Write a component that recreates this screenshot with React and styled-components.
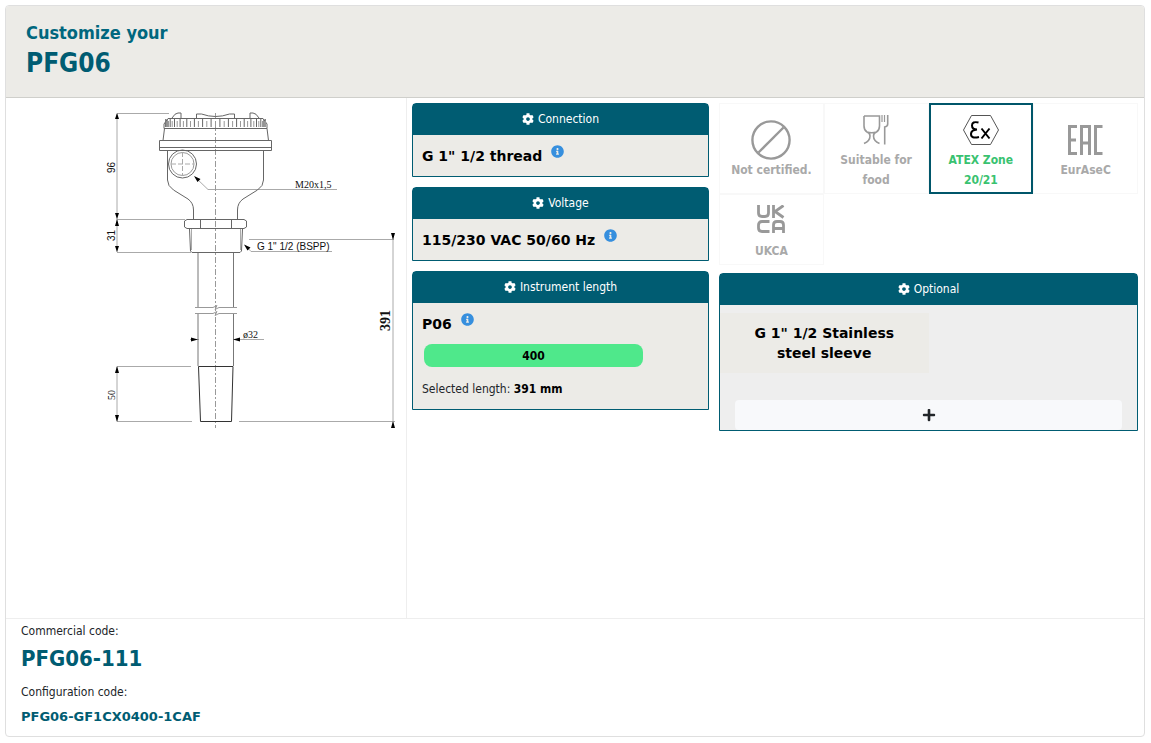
import React, { useState } from 'react';
import styled, { createGlobalStyle } from 'styled-components';
import { FaCog, FaInfoCircle, FaPlus } from 'react-icons/fa';

const GlobalStyle = createGlobalStyle`
    * {
        box-sizing: border-box;
    }

    body {
        margin: 0;
        background: #fff;
        color: #212529;
        font-family: 'DejaVu Sans Condensed', 'DejaVu Sans', sans-serif;
        font-size: 12px;
        line-height: 20px;
    }

    button {
        font-family: inherit;
        cursor: pointer;
    }
`;

const Card = styled.main`
    margin: 5px 6px 6px 5px;
    border: 1px solid #dfdfdf;
    border-radius: 4px;
    overflow: hidden;
`;

const Header = styled.header`
    padding: 15px 20px;
    border-bottom: 1px solid #cfcfcb;
    background: #ecebe7;
`;

const Title = styled.h1`
    margin: 0;
    color: #005c72;
    font-size: 26px;
    line-height: 37px;
`;

const Subtitle = styled.span`
    display: block;
    color: #00677e;
    font-size: 18px;
    line-height: 24px;
`;

const Body = styled.div`
    display: grid;
    grid-template-columns: 401fr 307fr 430fr;
    min-height: 520px;
`;

const DrawingColumn = styled.section`
    border-right: 1px solid #eee;
`;

const Column = styled.section`
    display: flex;
    flex-direction: column;
    gap: 10px;
    padding: 5px;
`;

const OptionsColumn = styled(Column)`
    gap: 8px;
    padding-right: 6px;
`;

const Panel = styled.section`
    border: 1px solid #005c72;
    border-radius: 4px 4px 0 0;
    background: ${({ $plain }) => ($plain ? '#eee' : '#ecebe7')};
`;

const PanelTitle = styled.h2`
    display: flex;
    align-items: center;
    justify-content: center;
    gap: 4px;
    margin: 0;
    padding: 5px 0 6px;
    background: #005c72;
    color: #fff;
    font-size: 12px;
    font-weight: normal;
    line-height: 20px;
`;

const PanelBody = styled.div`
    padding: 9px 9px 8px;
`;

const Value = styled.div`
    display: flex;
    gap: 9px;
    color: #000;
    font-family: 'DejaVu Sans', sans-serif;
    font-size: 14px;
    font-weight: bold;
    line-height: 24px;
`;

const InfoButton = styled.button`
    display: flex;
    align-self: flex-start;
    padding: 1px 0;
    border: 0;
    background: none;
    color: #368fde;
    font-size: 13px;
`;

const LengthButton = styled.button`
    display: block;
    width: 79%;
    margin: 8px 2px 12px;
    padding: 2px 0 1px;
    border: 0;
    border-radius: 8px;
    background: #4fe88b;
    color: #000;
    font-size: 12px;
    font-weight: bold;
    line-height: 20px;
`;

const SelectedLength = styled.p`
    margin: 0 0 2px;

    strong {
        color: #000;
    }
`;

const Certificates = styled.div`
    display: grid;
    grid-template-columns: repeat(4, 1fr);
`;

const Certificate = styled.button`
    display: flex;
    flex-direction: column;
    align-items: center;
    justify-content: center;
    padding: 6px 4px 3px;
    border: 1px solid #f8f8f8;
    background: #fff;
    color: #a9a9a9;
    font-size: 12px;
    font-weight: bold;
    line-height: 20px;

    &[aria-pressed='true'] {
        padding: 5px 3px 2px;
        border: 2px solid #00566a;
        color: #39c270;
    }
`;

const IconBox = styled.span`
    display: flex;
    align-items: center;
    justify-content: center;
    height: 40px;
`;

const OptionalBody = styled.div`
    padding: 8px 0 0;
`;

const OptionButton = styled.button`
    display: block;
    width: 50%;
    padding: 10px 20px;
    border: 0;
    background: #ecebe7;
    color: #000;
    font-family: 'DejaVu Sans', sans-serif;
    font-size: 14px;
    font-weight: bold;
    line-height: 20px;
`;

const AddButton = styled.button`
    display: flex;
    align-items: center;
    justify-content: center;
    width: calc(100% - 30px);
    height: 30px;
    margin: 27px 15px 0;
    border: 0;
    border-radius: 4px;
    background: #f8f9fb;
    color: #212529;
    font-size: 14px;
`;

const Footer = styled.footer`
    padding: 2px 15px 9px;
    border-top: 1px solid #eee;
`;

const CodeLabel = styled.p`
    margin: 0;
`;

const CommercialCode = styled.p`
    margin: 3px 0 8px;
    color: #005c72;
    font-size: 22px;
    font-weight: bold;
    line-height: 30px;
`;

const ConfigurationCode = styled.p`
    margin: 5px 0 0;
    color: #005c72;
    font-family: 'DejaVu Sans', sans-serif;
    font-size: 13px;
    font-weight: bold;
    line-height: 20px;
`;

const Drawing = styled.svg`
    display: block;
    width: 100%;
    height: auto;

    text {
        fill: #111;
        stroke: none;
        font-size: 10px;
    }

    .serif {
        font-family: 'Liberation Serif', serif;
    }

    .sans {
        font-family: 'Liberation Sans', sans-serif;
    }

    .total {
        font-size: 14px;
        font-weight: bold;
    }
`;

// the grip ridges get closer together towards the sides of the round lid
const ridges = [];
for (let i = 0; i < 37; i++) {
    ridges.push(Math.round((215.5 - Math.cos((Math.PI * i) / 36) * 50) * 10) / 10);
}

function InstrumentDrawing() {
    return (
        <Drawing viewBox="6 98 400 340" fill="none" stroke="#666" role="img" aria-label="Instrument dimensions">
            {/* dimension lines */}
            <g stroke="#aaa">
                <path d="M117 113.5H169M117 219.5H185M117 252.5H191M117 114V252M117 366.5H191M117 421.5H192M117 367V421" />
                <path d="M249 239.5H394M239 421.5H395M393 234V428M190 339.5H199M233 339.5H264" />
                <path d="M195 177L208 189.500H337M245 245L251 251.500H332" />
            </g>
            <path d="M215.500 113V428" stroke="#999" strokeDasharray="6 2 2 2" />

            {/* lid */}
            <path d="M172 118q3-5 6-5h3v5M259 118q-3-5-6-5h-3v5M196.500 118v-4h5q14 5 28 0h5v4" />
            <path d="M168 118.500H263L267 124V128.500H164V124Z" />
            {ridges.map((x, i) => (
                <path key={x} d={`M${x} ${i % 2 ? 119 : 121}V127`} stroke={i % 2 ? '#666' : '#999'} />
            ))}
            <path d="M164.500 128.500L163 140.500M267 128.500L268.500 140.500" />
            <path d="M159.500 140.500H271.500V150.500H159.500ZM159.500 147.500H271.500" />

            {/* housing */}
            <path d="M167.500 151V180q0 6 6 10L188 199q5.500 4 5.500 11V219.500H237.500V210q0-7 5.500-11L257.500 190q6-4 6-10V151" />
            <circle cx="182.500" cy="164" r="14" />
            <circle cx="182.500" cy="164" r="11.500" stroke="#999" />
            <path d="M171 164H194M182.500 152V176" stroke="#aaa" strokeDasharray="5 2" />

            {/* connection */}
            <path d="M187 219.500H244L246.500 221V227L244 228.500H187L184.500 227V221ZM200.500 220V228M231.500 220V228" />
            <path d="M189.500 229L190.500 251L192 252.500H240L241.500 251L242.500 229" />
            <path d="M191.500 229V250M240.500 229V250" stroke="#aaa" />

            {/* probe */}
            <path d="M198 253V307M233.500 253V307M198 314V366M233.500 314V366" stroke="#777" />
            <path d="M195 307.500H213l4-2-2 4 4-2H237M195 313.500H213l4-2-2 4 4-2H237" stroke="#999" />
            <path d="M198.500 366.500H233L231.500 421.500H200.500Z" stroke="#333" />

            <g fill="#000" stroke="none">
                <path d="M117 113l-2 6h4zM117 219l-2-6h4zM117 219l-2 7h4zM117 252l-2-6h4z" />
                <path d="M117 366l-2 7h4zM117 422l-2-7h4zM393 240l-2-7h4zM393 421l-2 7h4z" />
                <path d="M198 339.500l-7-2v4zM233 339.500l7-2v4zM194 176l6.500 3-3 3zM244 244.500l6.500 3-3 3z" />
            </g>

            <text className="serif" x="295" y="188">M20x1,5</text>
            <text className="sans" x="257" y="250">G 1" 1/2 (BSPP)</text>
            <text className="serif" x="243" y="338">ø32</text>
            <text className="sans" transform="translate(115 173) rotate(-90)">96</text>
            <text className="sans" transform="translate(115 241) rotate(-90)">31</text>
            <text className="serif" transform="translate(115 400) rotate(-90)">50</text>
            <text className="serif total" transform="translate(390 331) rotate(-90)">391</text>
        </Drawing>
    );
}

const NoneIcon = () => (
    <svg width="42" height="40" fill="none" stroke="#999" strokeWidth="2.400">
        <circle cx="21" cy="20" r="18.600" />
        <path d="M8.500 32.500L33.500 7.500" />
    </svg>
);

const FoodIcon = () => (
    <svg width="26" height="30" fill="none" stroke="#999" strokeWidth="1.600">
        <path d="M1 1H16.500V11q0 4-3 6-3 1-3 4 0 5 6 7.500M1 1V11q0 4 3 6 3 1 3 4 0 5-6 7.500M4 17q4.700 1.500 9.500 0" />
        <path d="M19 0V7M21.500 0V7" strokeWidth="1.200" />
        <path d="M24.700 0V9q0 2.500-3 3V29.500" />
    </svg>
);

const ExIcon = () => (
    <svg width="36" height="30" fill="none" stroke="#000">
        <path d="M.5 15L8.500.5H27.500L35.500 15L27.500 29.500H8.500Z" stroke="#555" />
        <path d="M15.500 7.500Q9 6 9 10.500Q9 14.500 14 14.500Q8 15 8 19Q8 24 16 22" strokeWidth="2" />
        <path d="M18.500 13.500L26.500 23.500M26.500 13.500L18.500 23.500" strokeWidth="2" />
    </svg>
);

const EacIcon = () => (
    <svg width="35" height="30" fill="none" stroke="#999" strokeWidth="3">
        <path d="M9 1.500H1.500V28.500H9M1.500 15H8" />
        <path d="M13.500 30V1.500H21.500V30M13.500 18H21.500" />
        <path d="M34.500 1.500H27.500V28.500H34.500" />
    </svg>
);

const UkcaIcon = () => (
    <svg width="28" height="32" fill="none" stroke="#999" strokeWidth="2.800">
        <path d="M1.500 0V8q0 3.500 3.500 3.500h3q3.500 0 3.500-3.500V0" />
        <path d="M16.500 0V13M26.500 .5L18 6.500L26.500 12.500" />
        <path d="M12.500 16.500H5q-3.500 0-3.500 3.500v3q0 3.500 3.500 3.500h7.500" />
        <path d="M16.500 28V20q0-3.500 3.500-3.500h3q3.500 0 3.500 3.500V28M16.500 23.500H26.500" />
    </svg>
);

const certificates = [
    { id: 'none', label: 'Not certified.', Icon: NoneIcon },
    { id: 'food', label: 'Suitable for food', Icon: FoodIcon },
    { id: 'atex', label: 'ATEX Zone 20/21', Icon: ExIcon },
    { id: 'eac', label: 'EurAseC', Icon: EacIcon },
    { id: 'ukca', label: 'UKCA', Icon: UkcaIcon },
];

function OptionPanel({ title, value, children }) {
    return (
        <Panel>
            <PanelTitle>
                <FaCog /> {title}
            </PanelTitle>
            <PanelBody>
                <Value>
                    {value}
                    <InfoButton type="button" aria-label={`About ${value}`}>
                        <FaInfoCircle />
                    </InfoButton>
                </Value>
                {children}
            </PanelBody>
        </Panel>
    );
}

function App() {
    const [certificate, setCertificate] = useState('atex');

    return (
        <>
            <GlobalStyle />
            <Card>
                <Header>
                    <Title>
                        <Subtitle>Customize your</Subtitle>
                        PFG06
                    </Title>
                </Header>
                <Body>
                    <DrawingColumn>
                        <InstrumentDrawing />
                    </DrawingColumn>
                    <Column>
                        <OptionPanel title="Connection" value={'G 1" 1/2 thread'} />
                        <OptionPanel title="Voltage" value="115/230 VAC 50/60 Hz" />
                        <OptionPanel title="Instrument length" value="P06">
                            <LengthButton type="button">400</LengthButton>
                            <SelectedLength>
                                Selected length: <strong>391 mm</strong>
                            </SelectedLength>
                        </OptionPanel>
                    </Column>
                    <OptionsColumn>
                        <Certificates>
                            {certificates.map(({ id, label, Icon }) => (
                                <Certificate
                                    key={id}
                                    type="button"
                                    aria-pressed={certificate === id}
                                    onClick={() => setCertificate(id)}
                                >
                                    <IconBox>
                                        <Icon />
                                    </IconBox>
                                    {label}
                                </Certificate>
                            ))}
                        </Certificates>
                        <Panel $plain>
                            <PanelTitle>
                                <FaCog /> Optional
                            </PanelTitle>
                            <OptionalBody>
                                <OptionButton type="button">G 1" 1/2 Stainless steel sleeve</OptionButton>
                                <AddButton type="button" aria-label="Add option">
                                    <FaPlus />
                                </AddButton>
                            </OptionalBody>
                        </Panel>
                    </OptionsColumn>
                </Body>
                <Footer>
                    <CodeLabel>Commercial code:</CodeLabel>
                    <CommercialCode>PFG06-111</CommercialCode>
                    <CodeLabel>Configuration code:</CodeLabel>
                    <ConfigurationCode>PFG06-GF1CX0400-1CAF</ConfigurationCode>
                </Footer>
            </Card>
        </>
    );
}

export default App;
